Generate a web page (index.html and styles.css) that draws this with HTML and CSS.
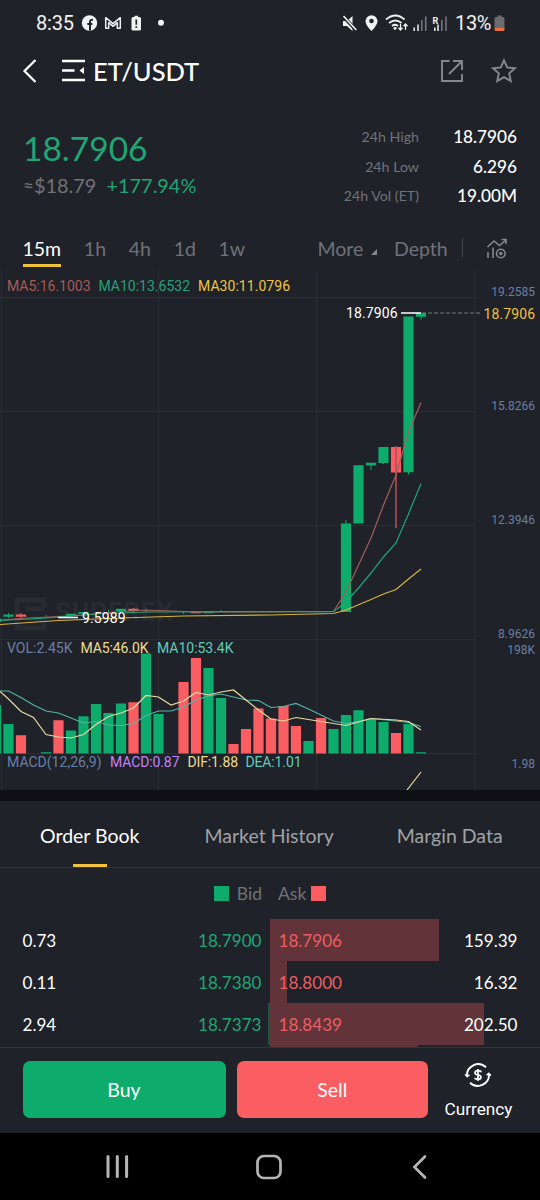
FILE: index.html
```html
<!DOCTYPE html>
<html lang="en">
<head>
  <meta charset="UTF-8" />
  <meta name="viewport" content="width=device-width, initial-scale=1" />
  <title>ET/USDT</title>
  <link rel="stylesheet" href="styles.css">
</head>
<body>
  <div class="status-bar">
    <span class="clock">8:35</span>
    <svg class="status-left" width="90" height="18" viewBox="0 0 90 18" fill="none">
      <circle cx="8.500" cy="9" r="7.700" fill="#f1f2f3"/>
      <path d="M9 16.500V8Q9 5.500 12 5.900M6.300 10h5" stroke="#1f2229" stroke-width="2"/>
      <path d="M24.700 14.300V3.700L32 9.700l7.300-6v10.600h-3V8.700L32 12.300l-4.300-3.600v5.600z" stroke="#f1f2f3" stroke-width="1.500" stroke-linejoin="round"/>
      <path d="M53.500 1.700H57V3h1.500q1.500 0 1.500 1.500V15q0 1.500-1.500 1.500H52Q50.500 16.500 50.500 15V4.500Q50.500 3 52 3h1.500z" fill="#f1f2f3"/>
      <path d="M55.300 5.500v5.200M55.300 12.200v1.800" stroke="#1f2229" stroke-width="1.700"/>
      <circle cx="80" cy="8.700" r="3" fill="#f1f2f3"/>
    </svg>
    <svg class="status-right" width="110" height="20" viewBox="0 0 110 20" fill="none">
      <path d="M2 8h4l5.500-5v15L6 13H2z" fill="#f1f2f3"/>
      <path d="M1.500 2.500l13 14" stroke="#1f2229" stroke-width="3.500"/>
      <path d="M2.500 3l12.800 14" stroke="#f1f2f3" stroke-width="1.600"/>
      <path fill-rule="evenodd" d="M30.500 2.200a6 6 0 0 0-6 6c0 4 6 9.800 6 9.800s6-5.800 6-9.800a6 6 0 0 0-6-6zm0 3.500a2.300 2.300 0 1 1 0 4.600 2.300 2.300 0 0 1 0-4.600z" fill="#f1f2f3"/>
      <path d="M45 6.500q9.500-8 18.500 0M48 10q6.500-5 12.500 0M51 13q3-2.500 6 0" stroke="#f1f2f3" stroke-width="1.800"/>
      <circle cx="54" cy="15.300" r="1.500" fill="#f1f2f3"/>
      <path d="M59.500 11v6m-2-2.300l2 2.300 2-2.300M64.500 17v-6m-2 2.300l2-2.300 2 2.300" stroke="#f1f2f3" stroke-width="1.300"/>
      <path d="M73.200 14.500V18M77 11.500V18M93.800 14.500V18M97 11.500V18" stroke="#f1f2f3" stroke-width="1.500"/>
      <path d="M80.800 7v11M84.700 3.500V18M100.800 7v11M105 3.500V18" stroke="#777a80" stroke-width="1.500"/>
      <text class="roaming" x="91.500" y="10.500">R</text>
    </svg>
    <span class="battery-text">13%</span>
    <svg class="battery" width="11" height="17" viewBox="0 0 11 17">
      <path d="M3.500.5h4V2h1.300q1.700 0 1.700 1.700V13H.5V3.700Q.5 2 2.200 2h1.300z" fill="#6b6c6f"/>
      <path d="M.5 13h10v1.500q0 1.500-1.500 1.500H2Q.5 16 .5 14.500z" fill="#e96f42"/>
    </svg>
  </div>

  <header class="header">
    <svg class="back" width="16" height="26" viewBox="0 0 16 26">
      <path d="M13.500 2L2.500 13l11 11" fill="none" stroke="#fff" stroke-width="2.200"/>
    </svg>
    <svg class="menu" width="25" height="24" viewBox="0 0 25 24">
      <path d="M1 2h23M1 11.500h12.500M1 21h23" stroke="#fff" stroke-width="2.600"/>
      <path d="M23 8v7l-4.500-3.500z" fill="#fff"/>
    </svg>
    <h1>ET/USDT</h1>
    <svg class="share" width="24" height="24" viewBox="0 0 24 24">
      <path d="M9.500 2H2v20h20v-7M13 2h9v9M22 2L9 15" fill="none" stroke="#86888c" stroke-width="1.900"/>
    </svg>
    <svg width="26" height="26" viewBox="0 0 26 26">
      <path d="M13 2.300l3.200 7.100 7.800.8-5.800 5.200 1.600 7.700-6.800-4-6.800 4 1.600-7.700L2 10.200l7.800-.8z" fill="none" stroke="#86888c" stroke-width="1.900"/>
    </svg>
  </header>

  <section class="ticker">
    <div class="ticker-price">
      <div class="last-price">18.7906</div>
      <div class="sub-price"><span class="approx">≈</span>$18.79 <span class="change">+177.94%</span></div>
    </div>
    <dl class="stats">
      <dt>24h High</dt><dd>18.7906</dd>
      <dt>24h Low</dt><dd>6.296</dd>
      <dt>24h Vol (ET)</dt><dd>19.00M</dd>
    </dl>
  </section>

  <nav class="intervals">
    <span class="active">15m</span>
    <span>1h</span>
    <span>4h</span>
    <span>1d</span>
    <span>1w</span>
    <span class="more">More<i class="corner"></i></span>
    <span class="depth">Depth</span>
    <i class="divider"></i>
    <svg width="22" height="22" viewBox="0 0 22 22" fill="none" stroke="#85878b" stroke-width="1.600">
      <path d="M1.500 9l6.500-6 5.500 4.500L20 2M15.500 1.500H20V6M2 14v6M7 9.500V20"/>
      <circle cx="14.800" cy="15.500" r="4.300"/>
      <circle cx="14.800" cy="15.500" r="1"/>
    </svg>
  </nav>

  <svg class="chart" width="540" height="520" viewBox="0 270 540 520">
    <path class="grid" d="M1.500 270V790M158.500 270V790M316.500 270V790M475 270V790M0 297.500H475M0 411.500H475M0 525.500H475M0 639.500H475M0 753.500H475"/>

    <g class="watermark">
      <path d="M44 608V600H17V628H44V620M26 609H44M26 619H44"/>
      <text x="55" y="621" textLength="118">SUPEREX</text>
    </g>

    <!-- candles -->
    <path class="candle up" d="M-4 618.500V622M8.500 614.500V616.700M71 613.800V615.800M83.500 612V613.800M121 608.800V611M208.500 611.500V613.300M346 523.500V612M358.500 465.200V523.500M371 462.700V465.500M383.500 447V463M408.500 316.500V472.300M421 313V316.700"/>
    <path class="candle down" d="M21 614.500V616.700M133.500 608.800V611M196 611.500V613.300"/>
    <path class="candle down" d="M396 447V472.500"/>
    <path class="wick up" d="M8.500 613V618M46 615V618M108.500 610V613M146 609V612M183.500 611V614M221 610V612M346 520V524M371 465V470M383.500 463V464M408.500 472V474.500M421 316V319.500"/>
    <path class="wick down" d="M21 613V619M133.500 608V613"/>
    <path class="wick-long" d="M396 446V528"/>

    <polyline class="ma5" points="0,620 21,618.500 58.500,616.500 83.500,615 121,611.500 146,610 196,612 333.500,611.500 346,592 371,538 383.500,505 396,475 408.500,432 421,402.500"/>
    <polyline class="ma10" points="0,620.500 46,618 96,614 146,612 221,611.700 333.500,611.700 346,602 358.500,588 371,573 383.500,557 396,543 408.500,514 421,483.500"/>
    <polyline class="ma30" points="0,624.500 58.500,620.500 121,618 183.500,616 270,615 333.500,613.500 346,610 371,599.500 383.500,594 396,589.500 408.500,579 421,569"/>

    <path class="marker" d="M401 313H421M58 617.500H78"/>
    <path class="price-line" d="M422 313H480"/>
    <text class="label white" x="346" y="318" textLength="51.500">18.7906</text>
    <text class="label white" x="82" y="623" textLength="43.500">9.5989</text>
    <text class="label gold" x="483.500" y="318.500" textLength="51.500">18.7906</text>

    <!-- volume -->
    <path class="candle up" d="M-4 705V753.500M8.500 724V753.500M46 752.300V753.500M71 730.500V753.500M83.500 716.300V753.500M96 704V753.500M108.500 713V753.500M121 703.500V753.500M146 653.500V753.500M158.500 714V753.500M208.500 668V753.500M221 698V753.500M308.500 741V753.500M333.500 729V753.500M346 715V753.500M358.500 710.300V753.500M371 719V753.500M383.500 722V753.500M408.500 724V753.500M421 752.300V753.500"/>
    <path class="candle down" d="M21 735.300V753.500M58.500 720.200V753.500M133.500 702.200V753.500M183.500 682V753.500M196 658V753.500M233.500 744V753.500M246 729V753.500M258.500 708.500V753.500M271 718.500V753.500M283.500 706V753.500M296 726V753.500M321 718V753.500M396 733V753.500"/>
    <polyline class="vol-ma10" points="0,691 8.500,691 21,697.500 33.500,705 46,711 58.500,713 71,718 83.500,723 96,721.500 108.500,725 121,725.500 133.500,723.500 146,715.500 158.500,711 171,711 183.500,707 196,700 208.500,696 221,694 233.500,697 246,700 258.500,700.500 271,707.500 283.500,706.500 296,703.500 308.500,709 321,715 333.500,721 346,723.500 358.500,721.500 371,718.500 396,721 408.500,722.500 421,726.500"/>
    <polyline class="vol-ma5" points="0,691.500 8.500,699 21,711.500 33.500,717.500 46,734.500 58.500,737 71,738 83.500,734.500 96,724.500 108.500,716.500 121,713 133.500,708 146,695.500 158.500,697 171,705 183.500,701 196,692.500 208.500,695 221,692 233.500,690 246,700 258.500,710 271,719 283.500,721 296,717.500 321,721.500 346,725.500 358.500,722 371,718.500 396,720 408.500,721.500 421,730"/>
    <path class="vol-ma5" d="M407 790L421 772"/>

    <g class="label">
      <text fill="#a95a55" x="7" y="291" textLength="83.500">MA5:16.1003</text>
      <text fill="#27a078" x="98.500" y="291" textLength="91.500">MA10:13.6532</text>
      <text fill="#efc441" x="198" y="291" textLength="92">MA30:11.0796</text>
      <text fill="#6a7fa3" x="7" y="653" textLength="65.500">VOL:2.45K</text>
      <text fill="#f1dc93" x="80.500" y="653" textLength="68">MA5:46.0K</text>
      <text fill="#61ccb9" x="157" y="653" textLength="76.500">MA10:53.4K</text>
      <text fill="#6a7fa3" x="7" y="767" textLength="94.500">MACD(12,26,9)</text>
      <text fill="#c482f5" x="110" y="767" textLength="69.500">MACD:0.87</text>
      <text fill="#f1dc93" x="187.500" y="767" textLength="50.500">DIF:1.88</text>
      <text fill="#61ccb9" x="245.500" y="767" textLength="56">DEA:1.01</text>
    </g>
    <g class="axis">
      <text x="535" y="295.500">19.2585</text>
      <text x="535" y="409.500">15.8266</text>
      <text x="535" y="523.500">12.3946</text>
      <text x="535" y="637.500">8.9626</text>
      <text x="535" y="653.500">198K</text>
      <text x="535" y="767.500">1.98</text>
    </g>
  </svg>

  <nav class="book-tabs">
    <span class="active">Order Book</span>
    <span>Market History</span>
    <span>Margin Data</span>
  </nav>

  <section class="book">
    <div class="legend">
      <div class="bid"><i></i>Bid</div>
      <div class="ask">Ask<i></i></div>
    </div>
    <div class="row">
      <div class="side bid"><b>0.73</b><em>18.7900</em></div>
      <div class="side ask"><i class="bar" style="width: 169px"></i><em>18.7906</em><b>159.39</b></div>
    </div>
    <div class="row">
      <div class="side bid"><b>0.11</b><em>18.7380</em></div>
      <div class="side ask"><i class="bar" style="width: 17px"></i><em>18.8000</em><b>16.32</b></div>
    </div>
    <div class="row">
      <div class="side bid"><i class="bar" style="width: 2px"></i><b>2.94</b><em>18.7373</em></div>
      <div class="side ask"><i class="bar" style="width: 214px"></i><em>18.8439</em><b>202.50</b></div>
    </div>
    <div class="row">
      <div class="side bid"></div>
      <div class="side ask"><i class="bar" style="width: 148px"></i></div>
    </div>
  </section>

  <footer class="actions">
    <button class="buy">Buy</button>
    <button class="sell">Sell</button>
    <div class="currency">
      <svg width="28" height="28" viewBox="0 0 28 28" fill="none" stroke="#fff" stroke-width="1.900">
        <path d="M22 6.200A11.300 11.300 0 0 0 3 15.500M6 21.800A11.300 11.300 0 0 0 25 12.500"/>
        <path d="M1 13.700l2 2.500 2.500-2zM27 14.300l-2-2.500-2.500 2z" fill="#fff" stroke-width="1"/>
        <path d="M17 11.300Q17 9.700 14 9.700T11 11.800Q11 13.700 14 14T17 16.300Q17 18.300 14 18.300T11 16.700M14 8v12" stroke-width="1.700"/>
      </svg>
      <span>Currency</span>
    </div>
  </footer>

  <div class="nav-bar">
    <svg width="24" height="26" viewBox="0 0 24 26"><path d="M3 2.500v20M12.300 2.500v20M21.600 2.500v20" stroke="#b5b5b5" stroke-width="3" stroke-linecap="round"/></svg>
    <svg class="home" width="26" height="26" viewBox="0 0 26 26"><rect x="1.500" y="2" width="23" height="22" rx="6.500" fill="none" stroke="#b5b5b5" stroke-width="2.700"/></svg>
    <svg width="16" height="26" viewBox="0 0 16 26"><path d="M13 2.500L2.500 13 13 23.500" fill="none" stroke="#b5b5b5" stroke-width="2.800" stroke-linecap="round"/></svg>
  </div>
</body>
</html>
```
FILE: styles.css
```css
:root {
  --bg: #1f2229;
  --line: #303339;
  --green: #0dac6d;
  --red: #fa5e63;
  --gold: #f0c23a;
  --muted: #707277;
}

*, *::before, *::after { box-sizing: border-box; }

body {
  margin: 0;
  width: 540px;
  height: 1200px;
  overflow: hidden;
  background: var(--bg);
  color: #fff;
  font-family: Lato, sans-serif;
  display: flex;
  flex-direction: column;
}

svg { display: block; flex: none; }

.status-bar {
  height: 46px;
  padding: 0 35px 0 36px;
  display: flex;
  align-items: center;
  font: 20px Roboto, sans-serif;
  color: #f1f2f3;
}

.clock { width: 45px; letter-spacing: -0.2px; }
.status-right { margin-left: auto; }
.roaming { font: 700 9px Roboto, sans-serif; fill: #f1f2f3; }
.battery-text { margin-left: 4px; letter-spacing: -0.4px; }
.battery { margin-left: 3px; }

.header {
  height: 52px;
  padding: 0 23px 2px 22px;
  display: flex;
  align-items: center;
}

.menu { margin-left: 23px; }
.header h1 {
  margin: 0 0 0 7px;
  font-size: 25.500px;
  font-weight: 500;
  line-height: 50px;
}
.share { margin: 0 27px 0 auto; }

.ticker {
  height: 130px;
  padding: 24px 23px 0;
  display: flex;
  justify-content: space-between;
}

.last-price {
  color: #20a574;
  font-size: 33.500px;
  line-height: 52px;
}

.sub-price {
  color: var(--muted);
  font-size: 19.900px;
  line-height: 22px;
}

.sub-price .approx { display: inline-block; width: 11px; font-size: 19px; }
.change { color: #20a574; margin-left: 5px; }

.stats {
  margin: 0;
  display: grid;
  grid-template-columns: auto 98px;
  grid-auto-rows: 29.500px;
  line-height: 29.500px;
  text-align: right;
}

.stats dt { color: var(--muted); font-size: 14.200px; }
.stats dd { margin: 0; font-size: 17.200px; font-weight: 500; }

.intervals {
  height: 42px;
  padding: 0 32px 0 22.500px;
  display: flex;
  align-items: flex-start;
  gap: 22.700px;
  color: var(--muted);
  font-size: 19.500px;
  line-height: 42px;
}

.intervals .active {
  height: 39px;
  color: #fff;
  border-bottom: 3px solid var(--gold);
}

.intervals .more { margin-left: auto; }
.intervals .depth { margin-left: -6px; }
.corner {
  display: inline-block;
  margin: 0 0 1px 8px;
  border-left: 6px solid transparent;
  border-bottom: 6px solid #85878b;
}
.divider { width: 1px; height: 19px; margin: 10px 0 0 -8px; background: #43464c; }
.intervals svg { margin-top: 10px; }

.chart { font-family: Roboto, sans-serif; fill: none; }
.grid { stroke: #2a2d35; }
.watermark path { stroke: #282b32; stroke-width: 5; }
.watermark text { fill: #282b32; font-size: 26px; font-weight: 700; }
.candle { stroke-width: 10.200; }
.wick { stroke-width: 1; }
.up { stroke: var(--green); }
.down { stroke: var(--red); }
.wick-long { stroke: #b24f58; stroke-width: 1.600; }
.ma5 { stroke: #a65d57; stroke-width: 1.200; }
.ma10 { stroke: #20a67b; stroke-width: 1.200; }
.ma30 { stroke: #d9b33d; stroke-width: 1.200; }
.vol-ma5 { stroke: #e9d9a0; stroke-width: 1.200; }
.vol-ma10 { stroke: #55b3a6; stroke-width: 1.200; }
.marker { stroke: #fff; stroke-width: 1.500; }
.price-line { stroke: #777a80; stroke-dasharray: 4 2; }
.label { font-size: 14px; }
.white { fill: #fff; }
.gold { fill: #efc441; }
.axis { fill: #6a7fa3; font-size: 12px; text-anchor: end; }

.book-tabs {
  height: 78px;
  padding: 0 38px 0 40px;
  border-top: 11px solid #0f1015;
  border-bottom: 1px solid var(--line);
  display: flex;
  gap: 65px;
  flex: none;
  font-size: 19.500px;
  line-height: 70px;
  color: #a0a2a6;
  white-space: nowrap;
}

.book-tabs span:last-child { margin-left: -2px; }

.book-tabs .active {
  width: 100px;
  display: flex;
  flex-direction: column;
  align-items: center;
  color: #fff;
}

.book-tabs .active::after {
  content: "";
  width: 34px;
  height: 3px;
  margin-top: -7px;
  background: var(--gold);
}

.book {
  height: 179px;
  flex: none;
  overflow: hidden;
}

.legend {
  height: 51px;
  display: flex;
  line-height: 52px;
  font-size: 17.500px;
  color: var(--muted);
}

.legend div {
  width: 50%;
  display: flex;
  align-items: center;
  gap: 8px;
}
.legend i { width: 15px; height: 15px; }
.legend .bid { justify-content: flex-end; padding-right: 8px; }
.legend .bid i { background: var(--green); }
.legend .ask { padding-left: 8px; gap: 5px; }
.legend .ask i { background: var(--red); }

.row { display: flex; height: 42px; line-height: 43px; font-size: 17.100px; }
.side {
  position: relative;
  width: 50%;
  display: flex;
  justify-content: space-between;
}
.side b, .side em { position: relative; font-weight: 400; font-style: normal; }
.side.bid { padding: 0 8.500px 0 22.500px; }
.side.ask { padding: 0 22.500px 0 8.500px; }
.side.bid em { color: #20a574; }
.side.ask em { color: #ee5c62; }
/* depth bar lies behind the prices */
.bar { position: absolute; top: 0; height: 42px; }
.bid .bar { right: 0; background: #1d5440; }
.ask .bar { left: 0; background: #623439; }

.actions {
  height: 86px;
  padding: 13px 22px 14px 22.500px;
  border-top: 1px solid var(--line);
  display: flex;
  flex: none;
}

.actions button {
  height: 57px;
  padding: 0;
  border: none;
  border-radius: 7px;
  color: #fff;
  font: 19.500px Lato, sans-serif;
}
.buy { width: 203px; background: var(--green); }
.sell { width: 191.500px; margin-left: 11px; background: var(--red); }

.currency {
  flex: 1;
  margin-left: 11px;
  display: flex;
  flex-direction: column;
  align-items: center;
  font: 17.200px/20px Roboto, sans-serif;
}
.currency svg { margin-left: -1px; }
.currency span { margin: 10px -5px 0; }

.nav-bar {
  flex: 1;
  padding: 0 112px 0 105px;
  background: #000;
  display: flex;
  align-items: center;
  justify-content: space-between;
}
.nav-bar .home { margin-right: 4px; }
```
